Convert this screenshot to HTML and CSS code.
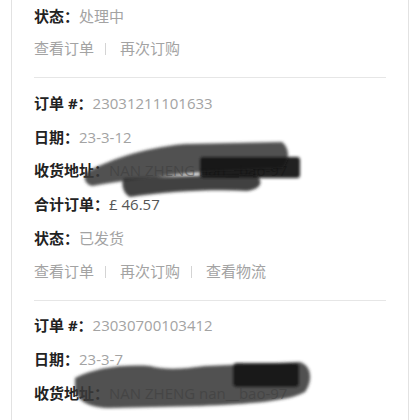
FILE: index.html
```html
<!DOCTYPE html>
<html lang="zh-CN">
<head>
<meta charset="utf-8">
<link rel="stylesheet" href="styles.css">
</head>
<body>
<div class="card">
  <section class="order first">
    <div class="row"><span class="label">状态：</span><span class="value">处理中</span></div>
    <div class="links"><span>查看订单</span><i class="sep"></i><span>再次订购</span></div>
  </section>
  <section class="order">
    <div class="row"><span class="label">订单 #：</span><span class="value">23031211101633</span></div>
    <div class="row"><span class="label">日期：</span><span class="value">23-3-12</span></div>
    <div class="row"><span class="label">收货地址：</span><span class="value">NAN ZHENG nan__bao-97</span></div>
    <div class="row"><span class="label">合计订单：</span><span class="value total">£ 46.57</span></div>
    <div class="row"><span class="label">状态：</span><span class="value">已发货</span></div>
    <div class="links"><span>查看订单</span><i class="sep"></i><span>再次订购</span><i class="sep"></i><span>查看物流</span></div>
  </section>
  <section class="order last">
    <div class="row"><span class="label">订单 #：</span><span class="value">23030700103412</span></div>
    <div class="row"><span class="label">日期：</span><span class="value">23-3-7</span></div>
    <div class="row"><span class="label">收货地址：</span><span class="value">NAN ZHENG nan__bao-97</span></div>
  </section>
</div>
<svg class="scribble" viewBox="0 0 420 420" width="420" height="420" aria-hidden="true">
  <defs>
    <filter id="soft" x="-10%" y="-30%" width="120%" height="160%">
      <feGaussianBlur stdDeviation="1.6"/>
    </filter>
  </defs>
  <g filter="url(#soft)">
    <path fill="#3a3a3a" fill-opacity="0.88" d="M87,172 C105,162 140,148 185,144 L282,142 C290,148 290,162 282,168 L205,172 C170,175 125,180 92,186 C84,184 83,176 87,172 Z"/>
    <path fill="#2f2f2f" fill-opacity="0.9" d="M124,178 L252,174 C264,178 264,189 247,191 C210,189 165,192 130,197 C122,193 121,182 124,178 Z"/>
    <rect x="200" y="157" width="100" height="21" rx="3" fill="#111" fill-opacity="0.92"/>
    <path fill="#3a3a3a" fill-opacity="0.88" d="M75,378 C92,369 120,364 150,366 C165,370 182,369 205,366 L300,362 C312,366 313,381 305,392 C290,401 250,404 200,406 L110,408 C90,408 77,401 75,390 Z"/>
    <rect x="233" y="363" width="66" height="24" rx="4" fill="#111" fill-opacity="0.9"/>
  </g>
</svg>
</body>
</html>
```

FILE: styles.css
```css
html, body {
  margin: 0;
  padding: 0;
  background: #fff;
  overflow: hidden;
}

body {
  width: 420px;
  height: 420px;
  position: relative;
  font-family: "Open Sans", "Noto Sans CJK SC", sans-serif;
  font-size: 15px;
  color: #999;
}

.card {
  margin: -0.5px 11px 0;
  padding: 0 22px;
  border-left: 1px solid #e2e2e2;
  border-right: 1px solid #e2e2e2;
  min-height: 440px;
}

.order {
  padding-top: 8.5px;
  padding-bottom: 14px;
  border-bottom: 1px solid #e6e6e6;
}

.order.first {
  padding-top: 0;
}

.order.last {
  border-bottom: none;
}

.row {
  line-height: 33.75px;
  height: 33.75px;
  white-space: nowrap;
}

.label {
  font-family: "Open Sans", "Noto Sans CJK SC", sans-serif;
  font-weight: bold;
  color: #222;
}

.value {
  color: #a3a3a3;
}

.value.total {
  color: #555;
}

.links {
  line-height: 30px;
  height: 30px;
  color: #a3a3a3;
  white-space: nowrap;
}

.sep {
  display: inline-block;
  width: 0;
  height: 12px;
  border-left: 1px solid #d4d4d4;
  margin: 0 14px 0 11px;
  vertical-align: -1px;
}

.scribble {
  position: absolute;
  left: 0;
  top: 0;
  pointer-events: none;
}
```
